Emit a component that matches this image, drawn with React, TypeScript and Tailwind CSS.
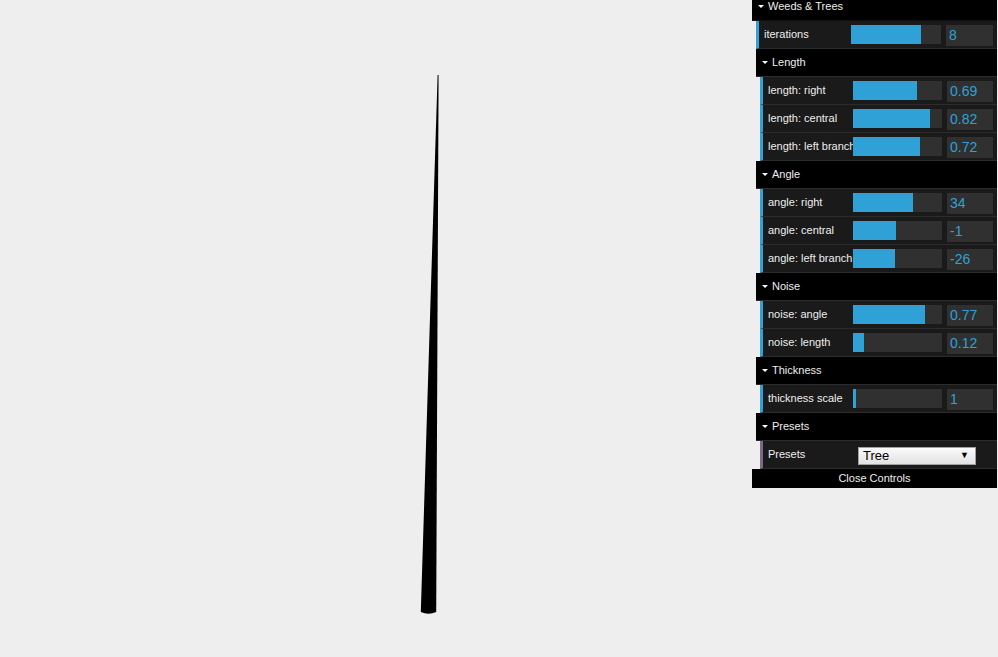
import React from 'react';

const FONT = "font-['Liberation_Sans',Arial,sans-serif]";

interface NumberRowProps {
  label: string;
  value: string;
  fill: number;
  root?: boolean;
}

function NumberRow({ label, value, fill, root }: NumberRowProps) {
  return (
    <li className="flex items-center h-[28px] bg-[#1a1a1a] border-b border-[#2c2c2c] border-l-[3px] border-l-[#2fa1d6] pl-[5px] pr-[4px]">
      <span className={`${root ? 'w-[87px]' : 'w-[85px]'} shrink-0 whitespace-nowrap text-[11px] text-[#eeeeee]`}>{label}</span>
      <div className={`relative ${root ? 'w-[90px]' : 'w-[89px]'} h-[19px] shrink-0 bg-[#303030]`}>
        <div className="h-full bg-[#2fa1d6]" style={{ width: fill }} />
      </div>
      <div className={`${root ? 'w-[47px]' : 'w-[46px]'} ml-[5px] h-[21px] mt-[2px] shrink-0 bg-[#303030] flex items-center pl-[3px] text-[14px] text-[#2fa1d6]`}>
        {value}
      </div>
    </li>
  );
}

function FolderTitle({ title }: { title: string }) {
  return (
    <li className="flex items-center h-[28px] bg-black border-b border-[#2c2c2c] pl-[6px]">
      <span className="w-0 h-0 border-l-[3px] border-r-[3px] border-t-[3px] border-l-transparent border-r-transparent border-t-white mr-[4px]" />
      <span className="text-[11px] text-[#eeeeee]">{title}</span>
    </li>
  );
}

function Folder({ title, children }: { title: string; children: React.ReactNode }) {
  return (
    <li>
      <ul>
        <FolderTitle title={title} />
        <li>
          <ul className="ml-[4px]">{children}</ul>
        </li>
      </ul>
    </li>
  );
}

export default function App() {
  return (
    <div className={`relative w-full h-[657px] bg-[#eeeeee] overflow-hidden ${FONT}`}>
      {/* canvas drawing */}
      <svg className="absolute inset-0" width="998" height="657" viewBox="0 0 998 657">
        <path d="M437.6 75 L438.6 75 L436.2 612 Q428.5 615.5 420.8 612 Z" fill="#000" />
      </svg>

      {/* controls panel */}
      <div className="absolute top-0 right-[1px] w-[245px]">
        <ul>
          <li className="flex items-start h-[21px] bg-black border-b border-[#111111] pl-[6px]">
            <span className="w-0 h-0 mt-[5px] border-l-[3px] border-r-[3px] border-t-[3px] border-l-transparent border-r-transparent border-t-white mr-[4px]" />
            <span className="text-[11px] leading-[13px] text-[#eeeeee]">Weeds &amp; Trees</span>
          </li>
          <li>
            <ul className="ml-[4px]">
              <NumberRow root label="iterations" value="8" fill={70} />
              <Folder title="Length">
                <NumberRow label="length: right" value="0.69" fill={64} />
                <NumberRow label="length: central" value="0.82" fill={77} />
                <NumberRow label="length: left branch" value="0.72" fill={67} />
              </Folder>
              <Folder title="Angle">
                <NumberRow label="angle: right" value="34" fill={60} />
                <NumberRow label="angle: central" value="-1" fill={43} />
                <NumberRow label="angle: left branch" value="-26" fill={42} />
              </Folder>
              <Folder title="Noise">
                <NumberRow label="noise: angle" value="0.77" fill={72} />
                <NumberRow label="noise: length" value="0.12" fill={11} />
              </Folder>
              <Folder title="Thickness">
                <NumberRow label="thickness scale" value="1" fill={3} />
              </Folder>
              <Folder title="Presets">
                <li className="flex items-center h-[28px] bg-[#1a1a1a] border-b border-[#2c2c2c] border-l-[3px] border-l-[#806787] pl-[5px] pr-[4px]">
                  <span className="w-[90px] shrink-0 text-[11px] text-[#eeeeee]">Presets</span>
                  <div className="w-[118px] h-[18px] mt-[2px] flex items-center justify-between border border-[#a0a0a0] bg-gradient-to-b from-[#fafafa] to-[#e2e2e2] pl-[4px] pr-[6px] text-[13px] text-black">
                    <span>Tree</span>
                    <span className="text-[9px]">▼</span>
                  </div>
                </li>
              </Folder>
            </ul>
          </li>
        </ul>
        <div className="h-[19px] bg-black flex items-center justify-center text-[11px] text-[#eeeeee]">Close Controls</div>
      </div>
    </div>
  );
}
